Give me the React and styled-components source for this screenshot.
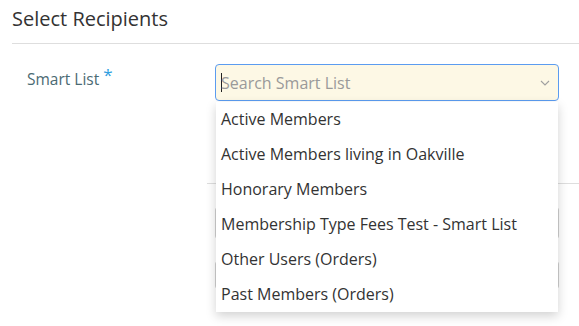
import React from 'react'
import styled, { createGlobalStyle } from 'styled-components'

const GlobalStyle = createGlobalStyle`
  html, body, #root {
    height: 100%;
  }
  body {
    margin: 0;
    background: #fff;
    font-family: 'Open Sans', 'Noto Sans', sans-serif;
    color: #333;
  }
`

const Page = styled.div`
  min-height: 100%;
  padding: 0 0 0 12px;
  overflow: hidden;
`

const Title = styled.h3`
  margin: 0;
  padding-top: 5px;
  font-size: 20px;
  font-weight: 400;
  line-height: 28px;
  color: #333;
`

const Divider = styled.div`
  height: 1px;
  background: #dedede;
  margin: ${p => p.$top || 10}px 0 0 ${p => p.$left || 0}px;
`

const Row = styled.div`
  display: grid;
  grid-template-columns: 188px 344px;
  margin-top: ${p => p.$top || 0}px;
  padding-left: 15px;
`

const Label = styled.label`
  font-size: 15.5px;
  color: #4b6a73;
  padding-top: 3px;
  span {
    color: #2f9ee0;
    font-size: 17px;
    margin-left: 4px;
    position: relative;
    top: -4px;
  }
`

const Field = styled.div`
  position: relative;
`

const SearchBox = styled.div`
  height: 37px;
  box-sizing: border-box;
  border: 1px solid #5b9cf0;
  border-radius: 4px;
  background: #fdf8e5;
  display: flex;
  align-items: center;
  padding: 0 8px 0 5px;
  font-size: 16px;
  color: #9a9a9a;
`

const Caret = styled.i`
  width: 1px;
  height: 19px;
  background: #222;
  margin-right: -1px;
`

const Placeholder = styled.div`
  flex: 1;
`

const Menu = styled.ul`
  position: absolute;
  top: 38px;
  left: 1px;
  right: 1px;
  margin: 0;
  padding: 0;
  list-style: none;
  background: #fff;
  box-shadow: 0 4px 10px rgba(0, 0, 0, 0.18);
  z-index: 2;
`

const Item = styled.li`
  height: 35px;
  line-height: 35px;
  padding-left: 5px;
  font-size: 16px;
  color: #333;
`

const Input = styled.div`
  height: ${p => p.$h || 32}px;
  box-sizing: border-box;
  border: 1px solid #cfcfcf;
  border-radius: 3px;
`

const options = [
  'Active Members',
  'Active Members living in Oakville',
  'Honorary Members',
  'Membership Type Fees Test - Smart List',
  'Other Users (Orders)',
  'Past Members (Orders)',
]

const App = () => {
  return (
    <Page>
      <GlobalStyle />
      <Title>Select Recipients</Title>
      <Divider $top={10} />
      <Row $top={20}>
        <Label>Smart List<span>*</span></Label>
        <Field>
          <SearchBox>
            <Caret />
            <Placeholder>Search Smart List</Placeholder>
            <svg width="10" height="6" viewBox="0 0 10 6">
              <path d="M1 1l4 4 4-4" fill="none" stroke="#a0a0a0" strokeWidth="1.1" />
            </svg>
          </SearchBox>
          <Menu>
            {options.map(o => <Item key={o}>{o}</Item>)}
          </Menu>
        </Field>
      </Row>
      <Divider $top={82} $left={195} />
      <Row $top={23}>
        <div />
        <Input />
      </Row>
      <Row $top={22}>
        <div />
        <Input $h={28} />
      </Row>
    </Page>
  )
}

export default App
